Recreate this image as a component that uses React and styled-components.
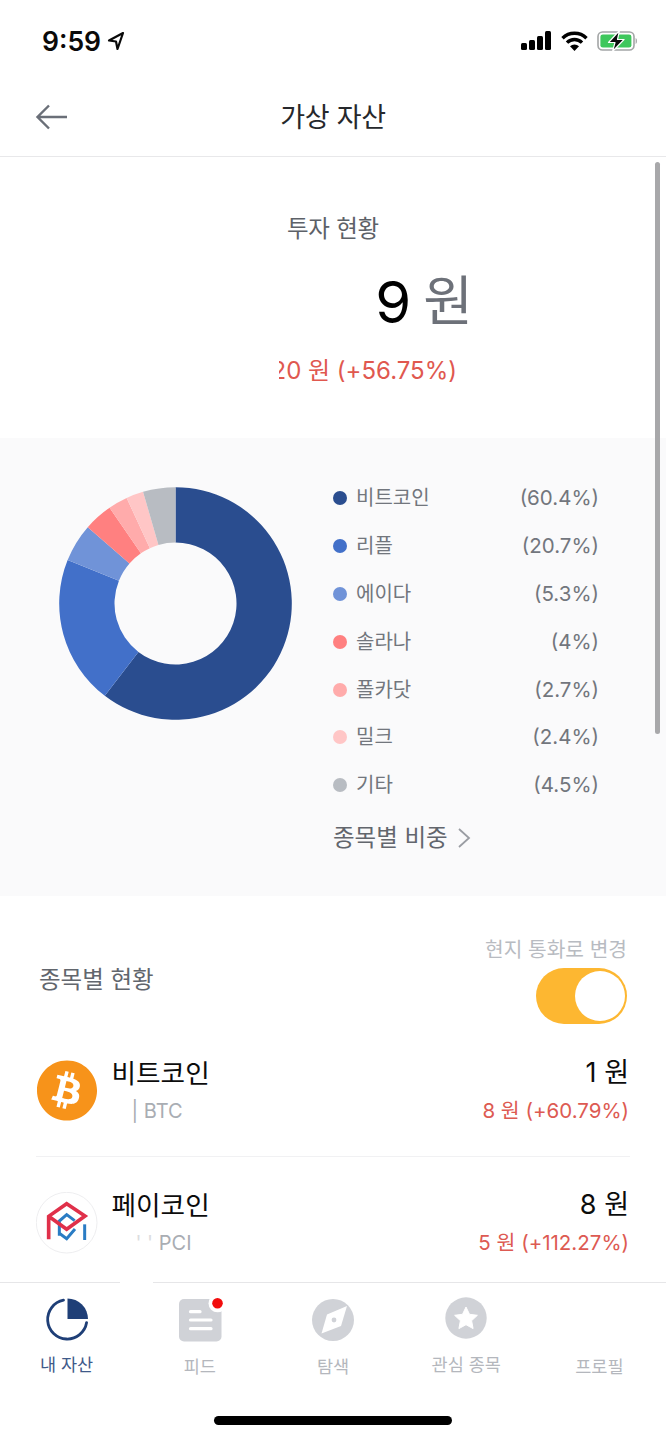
import React from 'react';
import styled, { createGlobalStyle } from 'styled-components';
import { FaBitcoin } from 'react-icons/fa';

const Global = createGlobalStyle`
  html, body { margin: 0; padding: 0; background: #fff; }
  * { box-sizing: border-box; }
  body { font-family: Inter, "Noto Sans CJK KR", "Noto Sans", sans-serif; }
`;

const Page = styled.div`
  position: relative;
  width: 666px;
  height: 1440px;
  display: flex;
  flex-direction: column;
  overflow: hidden;
  background: #fff;
`;
const StatusBar = styled.div`
  height: 78px;
  flex: none;
  display: flex;
  align-items: center;
  justify-content: space-between;
  padding: 3px 27px 0 42px;
`;
const Clock = styled.div`
  display: flex;
  align-items: center;
  gap: 6px;
  font: 600 26.5px/32px Inter, "Liberation Sans", sans-serif;
  color: #0a0a0a;
`;
const StatusIcons = styled.div`
  display: flex;
  align-items: center;
  gap: 9px;
`;
const NavBar = styled.div`
  position: relative;
  height: 79px;
  flex: none;
  display: flex;
  align-items: center;
  justify-content: center;
  padding-top: 2px;
  border-bottom: 1px solid #e8e8ea;
`;
const BackButton = styled.div`
  position: absolute;
  left: 35px;
  top: 26px;
  width: 34px;
  height: 26px;
  display: flex;
`;
const NavTitle = styled.div`
  font-size: 27px;
  line-height: 36px;
  font-weight: 400;
  color: #26282c;
  letter-spacing: -0.3px;
`;
const Main = styled.div`
  flex: 1;
  min-height: 0;
  overflow: hidden;
`;
const Summary = styled.section`
  height: 281px;
  padding-top: 58px;
  display: flex;
  flex-direction: column;
`;
const SummaryTitle = styled.div`
  text-align: center;
  font-size: 23.5px;
  line-height: 28px;
  letter-spacing: -0.2px;
  color: #5d6168;
`;
const Amount = styled.div`
  margin-top: 24px;
  padding-right: 193px;
  display: flex;
  justify-content: flex-end;
  align-items: center;
  gap: 12px;
  height: 70px;
`;
const AmountValue = styled.span`
  font-size: 58px;
  line-height: 70px;
  color: #000;
`;
const AmountUnit = styled.span`
  font-size: 54px;
  line-height: 70px;
  color: #6d7179;
`;
const ChangeClip = styled.div`
  margin: 19px 0 0 279px;
  width: 178px;
  height: 30px;
  overflow: hidden;
  display: flex;
  justify-content: flex-end;
`;
const ChangeText = styled.span`
  flex: none;
  white-space: nowrap;
  font-size: 24px;
  line-height: 30px;
  color: #e0584f;
`;
const ChartSection = styled.section`
  height: 458px;
  background: #fafafb;
  display: flex;
  align-items: flex-start;
  padding: 36px 0 0 59px;
`;
const DonutSvg = styled.svg`
  flex: none;
  margin-top: 12.5px;
  display: block;
`;
const LegendWrap = styled.div`
  width: 266px;
  margin-left: 41px;
`;
const LegendRow = styled.div`
  height: 47.9px;
  display: flex;
  align-items: center;
`;
const Dot = styled.span`
  width: 14px;
  height: 14px;
  border-radius: 50%;
  background: ${(p) => p.$color};
  flex: none;
`;
const LegendName = styled.span`
  margin-left: 9px;
  flex: 1;
  font-size: 20px;
  line-height: 28px;
  color: #72767d;
`;
const LegendValue = styled.span`
  font-size: 20.5px;
  line-height: 28px;
  color: #72767d;
`;
const DetailLink = styled.div`
  margin-top: 14px;
  height: 30px;
  display: flex;
  align-items: center;
  gap: 9px;
  font-size: 23.5px;
  line-height: 30px;
  color: #62666d;
`;
const Holdings = styled.section`
  padding-top: 40px;
`;
const HoldingsHead = styled.div`
  display: flex;
  align-items: center;
  justify-content: space-between;
  padding: 0 39px;
`;
const HoldingsTitle = styled.div`
  margin-top: -1px;
  font-size: 23.5px;
  line-height: 30px;
  color: #62666d;
`;
const ToggleColumn = styled.div`
  display: flex;
  flex-direction: column;
  align-items: flex-end;
  gap: 5px;
`;
const ToggleLabel = styled.div`
  padding-top: 1px;
  font-size: 20.3px;
  line-height: 26px;
  color: #b8bbc1;
`;
const Toggle = styled.div`
  width: 91px;
  height: 56px;
  border-radius: 28px;
  background: #fdb731;
  display: flex;
  align-items: center;
  justify-content: flex-end;
  padding-right: 2px;
`;
const Knob = styled.span`
  width: 50px;
  height: 50px;
  border-radius: 50%;
  background: #fff;
`;
const AssetRow = styled.div`
  height: ${(p) => (p.$last ? 131 : 133)}px;
  margin: 0 36px;
  display: flex;
  align-items: center;
  border-bottom: ${(p) => (p.$last ? 'none' : '1px solid #f1f1f3')};
`;
const CoinIcon = styled.div`
  width: 62px;
  height: 62px;
  flex: none;
  display: flex;
  align-items: center;
  justify-content: center;
  color: #f7931a;
`;
const AssetInfo = styled.div`
  flex: 1;
  margin-left: 13.5px;
  display: flex;
  flex-direction: column;
  gap: 5px;
`;
const AssetName = styled.div`
  font-size: 26.7px;
  line-height: 36px;
  color: #0c0c0c;
`;
const AssetTicker = styled.div`
  padding-left: ${(p) => p.$indent}px;
  font-size: 20px;
  line-height: 30px;
  color: #a9adb3;
  white-space: pre;
`;
const Faint = styled.span`
  color: #dcdde0;
`;
const AssetAmounts = styled.div`
  margin-right: 1px;
  display: flex;
  flex-direction: column;
  align-items: flex-end;
  gap: 5px;
`;
const AssetValue = styled.div`
  font-size: 27px;
  line-height: 36px;
  color: #0c0c0c;
`;
const AssetChange = styled.div`
  font-size: 20.5px;
  line-height: 30px;
  color: #dd5a52;
`;
const TabBar = styled.nav`
  position: relative;
  flex: none;
  height: 158px;
  display: grid;
  grid-template-columns: repeat(5, 1fr);
  align-items: start;
  border-top: 1px solid #e6e6e8;
  background: #fff;
  padding-top: 13px;
`;
const BorderGap = styled.span`
  position: absolute;
  left: 120px;
  top: -6px;
  width: 33px;
  height: 7px;
  background: #fff;
`;
const Tab = styled.div`
  display: flex;
  flex-direction: column;
  align-items: center;
`;
const TabIcon = styled.div`
  width: 46px;
  height: 46px;
  display: flex;
`;
const TabLabel = styled.div`
  margin-top: ${(p) => (p.$lift ? 10 : 12)}px;
  font-size: 17.5px;
  line-height: 26px;
  color: ${(p) => (p.$active ? '#3f5a8a' : '#b4b7bd')};
`;
const HomeIndicator = styled.span`
  position: absolute;
  left: 214px;
  top: 133px;
  width: 238px;
  height: 9px;
  border-radius: 5px;
  background: #000;
`;
const ScrollThumb = styled.span`
  position: absolute;
  left: 655px;
  top: 162px;
  width: 5px;
  height: 572px;
  border-radius: 3px;
  background: #a8a8aa;
`;

const slices = [
  { name: '비트코인', pct: 60.4, label: '(60.4%)', color: '#2a4d8f' },
  { name: '리플', pct: 20.7, label: '(20.7%)', color: '#4270c9' },
  { name: '에이다', pct: 5.3, label: '(5.3%)', color: '#7093d8' },
  { name: '솔라나', pct: 4, label: '(4%)', color: '#ff8080' },
  { name: '폴카닷', pct: 2.7, label: '(2.7%)', color: '#ffabab' },
  { name: '밀크', pct: 2.4, label: '(2.4%)', color: '#ffc6c6' },
  { name: '기타', pct: 4.5, label: '(4.5%)', color: '#b8bcc2' },
];

function Donut() {
  const R = 116.3;
  const r = 61;
  const c = 116.5;
  const pt = (rad, p) => {
    const a = (p / 100) * Math.PI * 2;
    return `${(c + rad * Math.sin(a)).toFixed(2)} ${(c - rad * Math.cos(a)).toFixed(2)}`;
  };
  let acc = 0;
  return (
    <DonutSvg width="233" height="233" viewBox="0 0 233 233">
      {slices.map((s) => {
        const a = acc;
        const b = acc + s.pct;
        acc = b;
        const large = s.pct > 50 ? 1 : 0;
        return (
          <path
            key={s.name}
            fill={s.color}
            d={`M${pt(R, a)}A${R} ${R} 0 ${large} 1 ${pt(R, b)}L${pt(r, b)}A${r} ${r} 0 ${large} 0 ${pt(r, a)}Z`}
          />
        );
      })}
    </DonutSvg>
  );
}

const LocationArrow = () => (
  <svg width="18" height="20" viewBox="0 0 18 20">
    <path d="M16 2 L2 9.5 L9 10.5 L10.5 18 Z" fill="none" stroke="#0a0a0a" strokeWidth="2.2" strokeLinejoin="round" />
  </svg>
);
const SignalIcon = () => (
  <svg width="31" height="19" viewBox="0 0 31 19">
    <rect x="0" y="12" width="6" height="7" rx="1.5" fill="#000" />
    <rect x="8" y="9" width="6" height="10" rx="1.5" fill="#000" />
    <rect x="16" y="5" width="6" height="14" rx="1.5" fill="#000" />
    <rect x="24" y="0" width="6" height="19" rx="1.5" fill="#000" />
  </svg>
);
const WifiIcon = () => (
  <svg width="27" height="20" viewBox="0 0 27 20">
    <g fill="none" stroke="#000" strokeWidth="3.4">
      <path d="M1.5 7.2 A17 17 0 0 1 25.5 7.2" />
      <path d="M6 11.6 A10.6 10.6 0 0 1 21 11.6" />
    </g>
    <path d="M13.5 20 L9 15.3 A6.4 6.4 0 0 1 18 15.3 Z" fill="#000" />
  </svg>
);
const BatteryIcon = () => (
  <svg width="42" height="22" viewBox="0 0 42 22">
    <rect x="1" y="2" width="36" height="18" rx="4.5" fill="#fff" stroke="#a3a5a6" strokeWidth="1.6" />
    <rect x="3.4" y="4.4" width="31" height="13.2" rx="2.4" fill="#3ec75c" />
    <path d="M38.6 8 C40.4 8.6 40.4 13.4 38.6 14 Z" fill="#a3a5a6" />
    <path d="M22.5 0.5 L11.5 12.5 H18 L15.5 21.5 L27 9.5 H20.5 Z" fill="#0a0a0a" stroke="#fff" strokeWidth="1.2" strokeLinejoin="round" />
  </svg>
);
const BackArrow = () => (
  <svg width="34" height="26" viewBox="0 0 34 26">
    <path d="M32 13 H3 M14 1.5 L2.5 13 L14 24.5" fill="none" stroke="#6a6f78" strokeWidth="2.4" />
  </svg>
);
const Chevron = () => (
  <svg width="14" height="22" viewBox="0 0 14 22">
    <path d="M2 2 L12 11 L2 20" fill="none" stroke="#9a9da3" strokeWidth="1.8" />
  </svg>
);
const PciLogo = () => (
  <svg width="62" height="62" viewBox="49 37 186 186">
    <circle cx="141" cy="129" r="91" fill="#fff" stroke="#eeeef0" strokeWidth="3" />
    <g fill="none">
      <path d="M119 168 V124 L141 105 L165 123 M166 148 L141 177 L119 161" stroke="#2a7cc4" strokeWidth="9" />
      <path d="M195 134 V181" stroke="#2a7cc4" strokeWidth="9" />
      <path d="M87 179 V110 L141 72 L196 109 L141 149 L89 111" stroke="#e0304a" strokeWidth="11" />
    </g>
  </svg>
);
const PieTab = () => (
  <svg width="46" height="46" viewBox="0 0 46 46">
    <path d="M19.5 4.2 A19.6 19.6 0 1 0 42.6 26.6" fill="none" stroke="#1f3f77" strokeWidth="2.8" strokeLinecap="round" />
    <path d="M23.5 2.5 A20.5 20.5 0 0 1 44 23 H23.5 Z" fill="#1f3f77" />
  </svg>
);
const FeedTab = () => (
  <svg width="46" height="46" viewBox="0 0 46 46">
    <rect x="2" y="3" width="42.5" height="42.5" rx="5" fill="#d0d2d7" />
    <circle cx="40.5" cy="7.3" r="9" fill="#fff" />
    <circle cx="40.5" cy="7.3" r="5.3" fill="#f20d0d" />
    <g stroke="#fff" strokeWidth="3.2" strokeLinecap="round">
      <path d="M13.5 15.7 H23" />
      <path d="M13.5 24 H34" />
      <path d="M13.5 32.7 H34" />
    </g>
  </svg>
);
const CompassTab = () => (
  <svg width="46" height="46" viewBox="0 0 46 46">
    <circle cx="23" cy="24" r="21" fill="#d0d2d7" />
    <path d="M37 10 L31 30 L11.5 37.5 L17 18.5 Z" fill="#fff" />
    <circle cx="24" cy="24" r="2.4" fill="#d0d2d7" />
  </svg>
);
const StarTab = () => (
  <svg width="46" height="46" viewBox="0 0 46 46">
    <circle cx="23" cy="22" r="20.7" fill="#d0d2d7" />
    <path d="M23 11 L26.5 18.3 L34.4 19.3 L28.6 24.7 L30.1 32.6 L23 28.7 L15.9 32.6 L17.4 24.7 L11.6 19.3 L19.5 18.3 Z" fill="#fff" stroke="#fff" strokeWidth="1" strokeLinejoin="round" />
  </svg>
);

export default function App() {
  return (
    <Page>
      <Global />
      <StatusBar>
        <Clock>
          9:59
          <LocationArrow />
        </Clock>
        <StatusIcons>
          <SignalIcon />
          <WifiIcon />
          <BatteryIcon />
        </StatusIcons>
      </StatusBar>
      <NavBar>
        <BackButton>
          <BackArrow />
        </BackButton>
        <NavTitle>가상 자산</NavTitle>
      </NavBar>
      <Main>
        <Summary>
          <SummaryTitle>투자 현황</SummaryTitle>
          <Amount>
            <AmountValue>9</AmountValue>
            <AmountUnit>원</AmountUnit>
          </Amount>
          <ChangeClip>
            <ChangeText>20 원 (+56.75%)</ChangeText>
          </ChangeClip>
        </Summary>
        <ChartSection>
          <Donut />
          <LegendWrap>
            {slices.map((s) => (
              <LegendRow key={s.name}>
                <Dot $color={s.color} />
                <LegendName>{s.name}</LegendName>
                <LegendValue>{s.label}</LegendValue>
              </LegendRow>
            ))}
            <DetailLink>
              종목별 비중
              <Chevron />
            </DetailLink>
          </LegendWrap>
        </ChartSection>
        <Holdings>
          <HoldingsHead>
            <HoldingsTitle>종목별 현황</HoldingsTitle>
            <ToggleColumn>
              <ToggleLabel>현지 통화로 변경</ToggleLabel>
              <Toggle>
                <Knob />
              </Toggle>
            </ToggleColumn>
          </HoldingsHead>
          <AssetRow>
            <CoinIcon>
              <FaBitcoin size={63} />
            </CoinIcon>
            <AssetInfo>
              <AssetName>비트코인</AssetName>
              <AssetTicker $indent={20}>| BTC</AssetTicker>
            </AssetInfo>
            <AssetAmounts>
              <AssetValue>1 원</AssetValue>
              <AssetChange>8 원 (+60.79%)</AssetChange>
            </AssetAmounts>
          </AssetRow>
          <AssetRow $last>
            <CoinIcon>
              <PciLogo />
            </CoinIcon>
            <AssetInfo>
              <AssetName>페이코인</AssetName>
              <AssetTicker $indent={24}>
                <Faint>' ' </Faint>PCI
              </AssetTicker>
            </AssetInfo>
            <AssetAmounts>
              <AssetValue>8 원</AssetValue>
              <AssetChange>5 원 (+112.27%)</AssetChange>
            </AssetAmounts>
          </AssetRow>
        </Holdings>
      </Main>
      <TabBar>
        <BorderGap />
        <Tab>
          <TabIcon>
            <PieTab />
          </TabIcon>
          <TabLabel $active $lift>내 자산</TabLabel>
        </Tab>
        <Tab>
          <TabIcon>
            <FeedTab />
          </TabIcon>
          <TabLabel>피드</TabLabel>
        </Tab>
        <Tab>
          <TabIcon>
            <CompassTab />
          </TabIcon>
          <TabLabel>탐색</TabLabel>
        </Tab>
        <Tab>
          <TabIcon>
            <StarTab />
          </TabIcon>
          <TabLabel $lift>관심 종목</TabLabel>
        </Tab>
        <Tab>
          <TabIcon />
          <TabLabel>프로필</TabLabel>
        </Tab>
        <HomeIndicator />
      </TabBar>
      <ScrollThumb />
    </Page>
  );
}
